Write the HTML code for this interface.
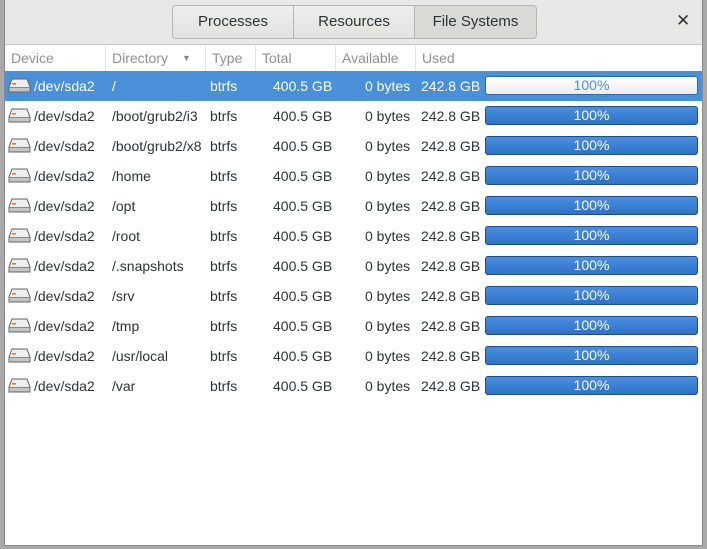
<!DOCTYPE html>
<html><head><meta charset="utf-8"><style>
*{margin:0;padding:0;box-sizing:border-box}
body{width:707px;height:549px;background:#a9a9a9;font-family:"Liberation Sans","DejaVu Sans",sans-serif;font-size:14px;position:relative;overflow:hidden}
.win{position:absolute;left:4px;top:0;width:699px;height:546px;background:#fff;border:1px solid #8a8a8a;border-top:none}
.hb{position:absolute;left:0;top:0;width:100%;height:45px;background:#e8e8e7;border-bottom:1px solid #c8c8c6}
.tabs{position:absolute;left:167px;top:5px;height:34px;display:flex;border:1px solid #b6b6b3;border-radius:4px;overflow:hidden;background:linear-gradient(#eeeeec,#e2e2df)}
.tabs div{width:121px;text-align:center;line-height:32px;font-size:15px;color:#2e3436;border-right:1px solid #b6b6b3}
.tabs div:last-child{border-right:none;background:#d9d9d6;width:121px}
.x{position:absolute;left:671px;top:11px;font-size:17px;font-weight:bold;color:#2e3436}
.ch{position:absolute;top:46px;left:0;width:100%;height:25px;color:#919191;font-size:14px}
.ch span{position:absolute;top:4px}
.sep{position:absolute;top:0;width:1px;height:25px;background:#e3e3e3}
.row{position:absolute;left:0;width:100%;height:30px;color:#2e3436}
.row.sel{background:#4a90d9;color:#fff}
.row span{position:absolute;top:7px;white-space:nowrap}
.ic{position:absolute;left:3px;top:6px;width:23px;height:17px}
.bar{position:absolute;left:480px;top:5px;width:213px;height:19px;border:1px solid #1d4f8a;border-radius:3px;background:linear-gradient(#4a8ee0,#2f73c8);color:#fff;text-align:center;line-height:17px;font-size:14px}
.sel .bar{background:linear-gradient(#fff,#ececec);border-color:#2b6aad;color:#4a90d9}
</style></head><body>
<div class="win">
<div class="hb"><div class="tabs"><div>Processes</div><div>Resources</div><div>File Systems</div></div><div class="x">✕</div></div>
<div class="ch">
<span style="left:6px">Device</span>
<div class="sep" style="left:100px"></div>
<span style="left:107px">Directory</span><span style="left:177px;top:7px;font-size:9px;color:#888">▼</span>
<div class="sep" style="left:200px"></div>
<span style="left:207px">Type</span>
<div class="sep" style="left:250px"></div>
<span style="left:257px">Total</span>
<div class="sep" style="left:330px"></div>
<span style="left:337px">Available</span>
<div class="sep" style="left:410px"></div>
<span style="left:417px">Used</span>
</div>
<div id="rows"></div>
</div>
<script>
var d=["/","/boot/grub2/i3","/boot/grub2/x8","/home","/opt","/root","/.snapshots","/srv","/tmp","/usr/local","/var"];
var h="";
var icon='<svg class="ic" viewBox="0 0 23 17"><path d="M4 2h15l3 8v5H1v-5z" fill="#d8d8d8" stroke="#666"/><path d="M4.5 2.8h14l2.6 7H1.9z" fill="#efefef"/><path d="M1 10.5h21" stroke="#888"/><rect x="4" y="6" width="4" height="1.6" fill="#e8782a"/><rect x="2" y="11" width="19" height="3.5" fill="#c4c4c4"/></svg>';
d.forEach(function(x,i){
h+='<div class="row'+(i==0?' sel':'')+'" style="top:'+(71+i*30)+'px">'+icon+
'<span style="left:29px">/dev/sda2</span><span style="left:107px;width:92px;overflow:hidden">'+x+'</span><span style="left:205px">btrfs</span><span style="left:268px">400.5 GB</span><span style="left:360px">0 bytes</span><span style="left:416px">242.8 GB</span><div class="bar">100%</div></div>';
});
document.getElementById("rows").innerHTML=h;
</script>
</body></html>
